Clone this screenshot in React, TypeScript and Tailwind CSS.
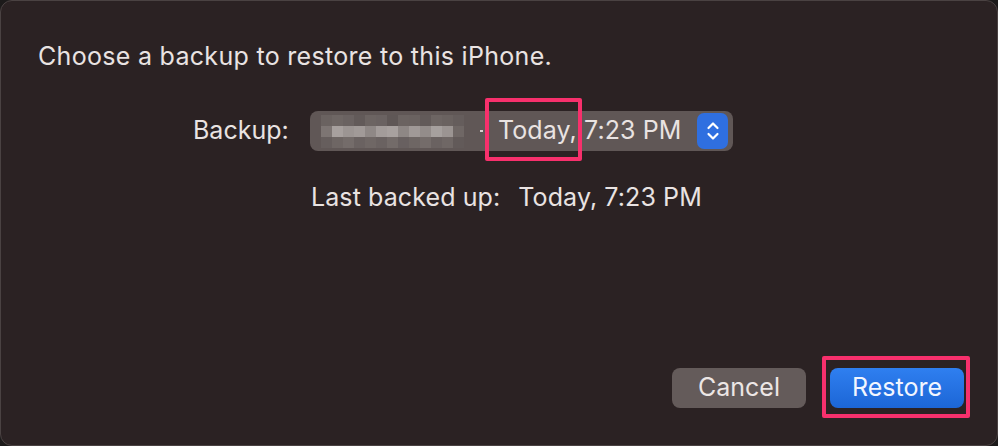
const mosaic = [
  ["bg-[#6a6260]", "bg-[#6e6664]", "bg-[#6a6261]", "bg-[#625a59]", "bg-[#6c6462]", "bg-[#6a6261]", "bg-[#5f5756]", "bg-[#6b6361]", "bg-[#6a6260]", "bg-[#625a59]", "bg-[#6d6563]", "bg-[#6a6260]", "bg-[#655d5c]"],
  ["bg-[#7d7573]", "bg-[#a7a09e]", "bg-[#9c9593]", "bg-[#a19a98]", "bg-[#8f8886]", "bg-[#a39c9a]", "bg-[#a8a19f]", "bg-[#8e8785]", "bg-[#a09997]", "bg-[#938c8a]", "bg-[#a6a09e]", "bg-[#9b9492]", "bg-[#6f6765]"],
  ["bg-[#665e5d]", "bg-[#6e6664]", "bg-[#746c6a]", "bg-[#6a6261]", "bg-[#6f6765]", "bg-[#6a6261]", "bg-[#736b69]", "bg-[#686060]", "bg-[#6e6664]", "bg-[#746c6a]", "bg-[#6a6261]", "bg-[#6f6765]", "bg-[#625a59]"],
];

export default function App() {
  return (
    <div className="w-[998px] h-[446px] bg-[#1c1a1a] font-['Inter','Liberation_Sans',sans-serif] text-[#e9e3e2]">
      <div className="w-full h-full rounded-[12px] bg-[#2b2223] border border-[#4a4242] flex flex-col px-[37px] pt-[38px] pb-[37px]">
        {/* Prompt */}
        <p className="text-[25px] leading-[34px] tracking-[0.3px]">Choose a backup to restore to this iPhone.</p>

        {/* Backup picker */}
        <div className="flex items-center mt-[38px] pl-[155px]">
          <span className="text-[25px] w-[117px]">Backup:</span>
          <div className="relative w-[423px] h-[40px] rounded-[8px] bg-[#605756] flex items-center pl-[11px] pr-[5px]">
            <div className="grid grid-cols-[repeat(13,11px)] grid-rows-[repeat(3,11px)]">
              {mosaic.flat().map((c, i) => (
                <div key={i} className={c}></div>
              ))}
            </div>
            <span className="ml-[16px] w-[3px] h-[2px] bg-[#d8d2d1]"></span>
            <span className="ml-[15px] text-[25px] tracking-[0.1px]">Today, 7:23 PM</span>
            <div className="ml-auto w-[31px] h-[36px] rounded-[7px] bg-[#2f6fe0] flex items-center justify-center">
              <svg width="14" height="22" viewBox="0 0 14 22" fill="none" stroke="#ffffff" strokeWidth="2.2" strokeLinecap="round" strokeLinejoin="round">
                <path d="M2.5 8 L7 3.5 L11.5 8" />
                <path d="M2.5 14 L7 18.5 L11.5 14" />
              </svg>
            </div>
            {/* highlight */}
            <div className="absolute left-[175px] top-[-13px] w-[97px] h-[63px] border-[4px] border-[#f7306c] rounded-[2px]"></div>
          </div>
        </div>

        {/* Last backed up */}
        <div className="mt-[28px] pl-[273px] text-[25px] tracking-[0.1px]">
          <span>Last backed up:</span>
          <span className="ml-[18px]">Today, 7:23 PM</span>
        </div>

        {/* Buttons */}
        <div className="mt-auto flex justify-end gap-[24px] mr-[-4px]">
          <button className="w-[134px] h-[40px] rounded-[8px] bg-[#645b5a] text-[25px] text-[#ece6e5]">Cancel</button>
          <div className="relative">
            <button className="w-[134px] h-[40px] rounded-[8px] bg-gradient-to-b from-[#2f7ff0] to-[#1c66d6] text-[25px] text-[#f2f6ff]">Restore</button>
            <div className="absolute left-[-8px] top-[-12px] w-[148px] h-[62px] border-[4px] border-[#f7306c] rounded-[2px]"></div>
          </div>
        </div>
      </div>
    </div>
  );
}
